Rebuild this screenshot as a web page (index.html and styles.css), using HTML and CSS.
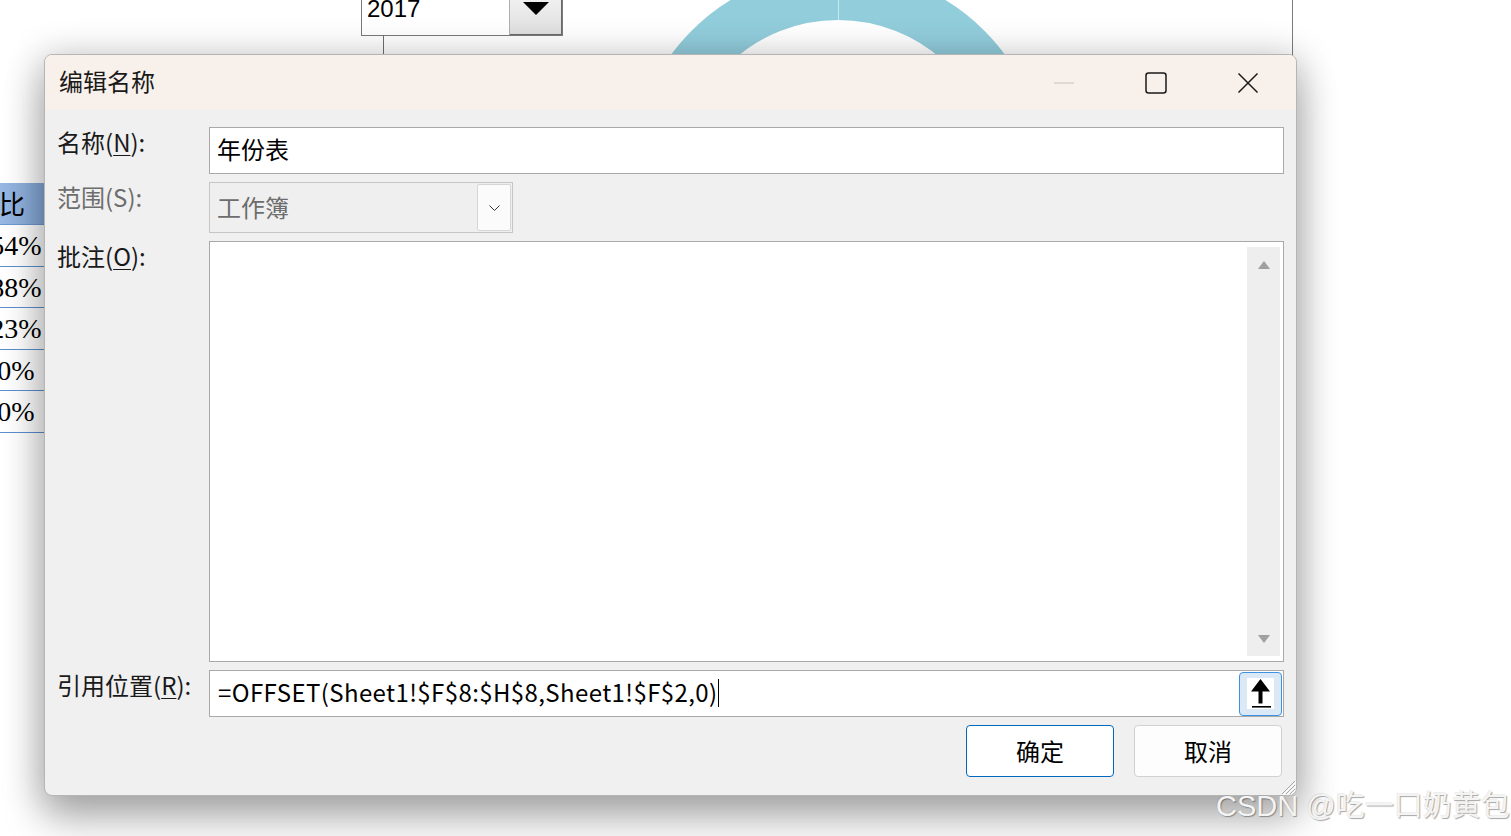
FILE: index.html
```html
<!DOCTYPE html>
<html lang="zh-CN">
<head>
<meta charset="utf-8">
<title>编辑名称</title>
<link rel="stylesheet" href="styles.css">
</head>
<body>
<div class="sheet">
  <div class="chart-area"></div>
  <svg class="donut" width="480" height="60" viewBox="0 0 480 60">
    <circle cx="238" cy="177" r="182" fill="none" stroke="#92cddc" stroke-width="50" />
    <line x1="238.5" y1="0" x2="238.5" y2="20" stroke="#c9e7ef" stroke-width="1"/>
  </svg>
  <div class="year-combo">
    <span class="year-text">2017</span>
    <span class="year-btn"><svg width="26" height="13" viewBox="0 0 26 13"><polygon points="0,0 26,0 13,13" fill="#000"/></svg></span>
  </div>
  <div class="leader"></div>
  <div class="cells">
    <div class="cell head">占比</div>
    <div class="cell">54%</div>
    <div class="cell">88%</div>
    <div class="cell">23%</div>
    <div class="cell">0%</div>
    <div class="cell">0%</div>
  </div>
</div>

<div class="dialog">
  <div class="titlebar">
    <div class="title">编辑名称</div>
    <div class="caps">
      <div class="cap"><svg width="20" height="2" viewBox="0 0 20 2"><rect x="0" y="0.5" width="20" height="1" fill="#c4c4c4"/></svg></div>
      <div class="cap"><svg width="22" height="22" viewBox="0 0 22 22"><rect x="1" y="1" width="20" height="20" rx="2.5" fill="none" stroke="#1a1a1a" stroke-width="1.5"/></svg></div>
      <div class="cap"><svg width="22" height="22" viewBox="0 0 22 22"><path d="M1.5 1.5 L20.5 20.5 M20.5 1.5 L1.5 20.5" stroke="#1a1a1a" stroke-width="1.5" fill="none"/></svg></div>
    </div>
  </div>
  <div class="content">
    <div class="row">
      <div class="lbl">名称(<u>N</u>):</div>
      <div class="field name-field"><span>年份表</span></div>
    </div>
    <div class="row">
      <div class="lbl disabled">范围(S):</div>
      <div class="combo">
        <span class="combo-text">工作簿</span>
        <span class="combo-btn"><svg width="11" height="6" viewBox="0 0 11 6"><path d="M0.5 0.5 L5.5 5.5 L10.5 0.5" fill="none" stroke="#333" stroke-width="1"/></svg></span>
      </div>
    </div>
    <div class="row">
      <div class="lbl">批注(<u>O</u>):</div>
      <div class="field memo">
        <div class="vscroll">
          <svg width="12" height="8" viewBox="0 0 12 8"><polygon points="6,0 12,8 0,8" fill="#a0a0a0"/></svg>
          <svg width="12" height="8" viewBox="0 0 12 8"><polygon points="0,0 12,0 6,8" fill="#a0a0a0"/></svg>
        </div>
      </div>
    </div>
    <div class="row">
      <div class="lbl">引用位置(<u>R</u>):</div>
      <div class="field ref-field">
        <span class="formula">=OFFSET(Sheet1!$F$8:$H$8,Sheet1!$F$2,0)</span><span class="caret"></span>
        <span class="ref-btn">
          <span class="ref-icon"><svg width="27" height="31" viewBox="0 0 27 31"><polygon points="13.5,1 23,13.5 15.5,13.5 15.5,25.5 11.5,25.5 11.5,13.5 4,13.5" fill="#000"/><rect x="5" y="28" width="19" height="1.6" fill="#000"/></svg></span>
        </span>
      </div>
    </div>
    <div class="actions">
      <div class="btn primary">确定</div>
      <div class="btn">取消</div>
    </div>
  </div>
  <svg class="grip" width="16" height="16" viewBox="0 0 16 16">
    <path d="M15 2 L2 15 M15 6 L6 15 M15 10 L10 15" stroke="#a8a8a8" stroke-width="1"/>
    <path d="M16 3 L3 16 M16 7 L7 16 M16 11 L11 16" stroke="#ffffff" stroke-width="1"/>
  </svg>
</div>

<div class="watermark">CSDN @吃一口奶黄包</div>
</body>
</html>
```

FILE: styles.css
```css
* { box-sizing: border-box; margin: 0; padding: 0; }
html, body { width: 1511px; height: 836px; }
body {
  position: relative;
  overflow: hidden;
  background: #ffffff;
  font-family: "Noto Sans CJK SC", "Noto Sans", sans-serif;
  color: #1a1a1a;
}

/* background worksheet */
.sheet { position: absolute; left: 0; top: 0; width: 1511px; height: 836px; }
.chart-area {
  position: absolute; left: 200px; top: 0; width: 1093px; height: 760px;
  border-right: 1px solid #7c7c7c; background: #ffffff;
}
.donut { position: absolute; left: 600px; top: 0; }
.year-combo {
  position: absolute; left: 361px; top: -14px; width: 202px; height: 50px;
  border: 1px solid #7a7a7a; background: #fff; display: flex;
}
.year-text { flex: 1; font: 24px "Liberation Sans", Arial, sans-serif; line-height: 43px; padding-left: 5px; color: #000; }
.year-btn {
  width: 53px; background: linear-gradient(#f6f6f6, #dedede);
  border-left: 1px solid #b0b0b0; box-shadow: inset -1px -1px 0 #6a6a6a;
  display: flex; justify-content: center; align-items: flex-start; padding-top: 15px;
}
.leader { position: absolute; left: 383px; top: 35px; width: 1px; height: 20px; background: #6f6f6f; }
.cells { position: absolute; left: -12px; top: 183px; width: 56px; }
.cell {
  height: 41.6px; border-bottom: 1px solid #5b8fd0; text-align: center;
  font: 28px "Liberation Serif", "Times New Roman", serif; line-height: 42px; color: #000;
}
.cell.head {
  height: 42px; background: linear-gradient(90deg, #9dbde6, #86a9d8);
  display: flex; justify-content: flex-end; overflow: hidden; white-space: nowrap;
  padding-right: 19px; font: 26px "Noto Sans CJK SC", sans-serif; line-height: 40px; border-bottom: 1px solid #6d98d0;
}

/* dialog window */
.dialog {
  position: absolute; left: 44px; top: 54px; width: 1253px; height: 742px;
  border: 1px solid #b5b5b5; border-radius: 8px; background: #f0f0f0;
  box-shadow: 0 4px 36px 4px rgba(0, 0, 0, 0.2), 0 24px 40px rgba(0, 0, 0, 0.25);
  overflow: hidden; display: flex; flex-direction: column;
}
.titlebar { height: 55px; flex: none; background: #f8f0eb; display: flex; align-items: center; }
.title { flex: 1; padding-left: 14px; font-size: 24px; line-height: 51px; padding-bottom: 4px; color: #1a1a1a; }
.caps { display: flex; margin-right: 2px; }
.cap { width: 92px; height: 55px; display: flex; align-items: center; justify-content: center; }

.content { flex: 1; padding: 17px 12px 18px 12px; display: flex; flex-direction: column; gap: 8px; }
.row { display: flex; }
.lbl { width: 152px; flex: none; font-size: 24px; line-height: 30px; color: #1a1a1a; white-space: nowrap; }
.lbl u { text-underline-offset: 3px; text-decoration-thickness: 1px; }
.lbl.disabled { color: #6d6d6d; }

.field { flex: 1; background: #fff; border: 1px solid #a9a9a9; }
.name-field { height: 47px; display: flex; align-items: center; padding: 0 0 4px 7px; font-size: 24px; color: #000; }

.combo {
  width: 304px; height: 51px; border: 1px solid #c6c6c6; background: #efefef;
  display: flex; align-items: center; padding: 1px;
}
.combo-text { flex: 1; padding-left: 6px; padding-bottom: 3px; font-size: 24px; color: #6d6d6d; }
.combo-btn {
  width: 34px; height: 47px; background: #fbfbfb; border: 1px solid #d6d6d6; border-radius: 2px;
  display: flex; align-items: center; justify-content: center;
}

.memo { height: 421px; display: flex; justify-content: flex-end; padding: 5px 3px 5px 0; }
.vscroll {
  width: 33px; background: #eeeeee; display: flex; flex-direction: column;
  justify-content: space-between; align-items: center; padding: 14px 0 13px 1px;
}

.ref-field { height: 47px; display: flex; align-items: center; padding-left: 8px; padding-right: 1px; }
.formula { font-size: 24px; letter-spacing: 0.4px; color: #000; white-space: nowrap; margin-top: -5px; }
.caret { width: 1.5px; height: 28px; background: #000; margin-left: 0; margin-top: -2px; }
.ref-btn {
  margin-left: auto; width: 43px; height: 44px; border: 1.5px solid #3f92e2; border-radius: 4px;
  background: #dbe9f7; display: flex; align-items: center; justify-content: center;
}
.ref-icon { width: 27px; height: 31px; background: #fff; display: block; }
.ref-icon svg { display: block; }

.actions { display: flex; justify-content: flex-end; gap: 20px; padding-right: 2px; }
.btn {
  width: 148px; height: 52px; border: 1px solid #d1d1d1; border-radius: 4px; background: #fdfdfd;
  display: flex; align-items: center; justify-content: center; font-size: 24px; color: #000; padding-bottom: 2px;
}
.btn.primary { border-color: #0067c0; background: #ffffff; }

.grip { position: absolute; right: 0; bottom: 0; }

.watermark {
  position: absolute; left: 1216px; top: 786px; font-size: 29px; line-height: 40px;
  font-family: "Liberation Sans", "Noto Sans CJK SC", sans-serif;
  color: #f4f4f4; white-space: nowrap;
  text-shadow: 1px 1px 1px rgba(0, 0, 0, 0.35), -1px -1px 0 rgba(0, 0, 0, 0.08);
}
```
